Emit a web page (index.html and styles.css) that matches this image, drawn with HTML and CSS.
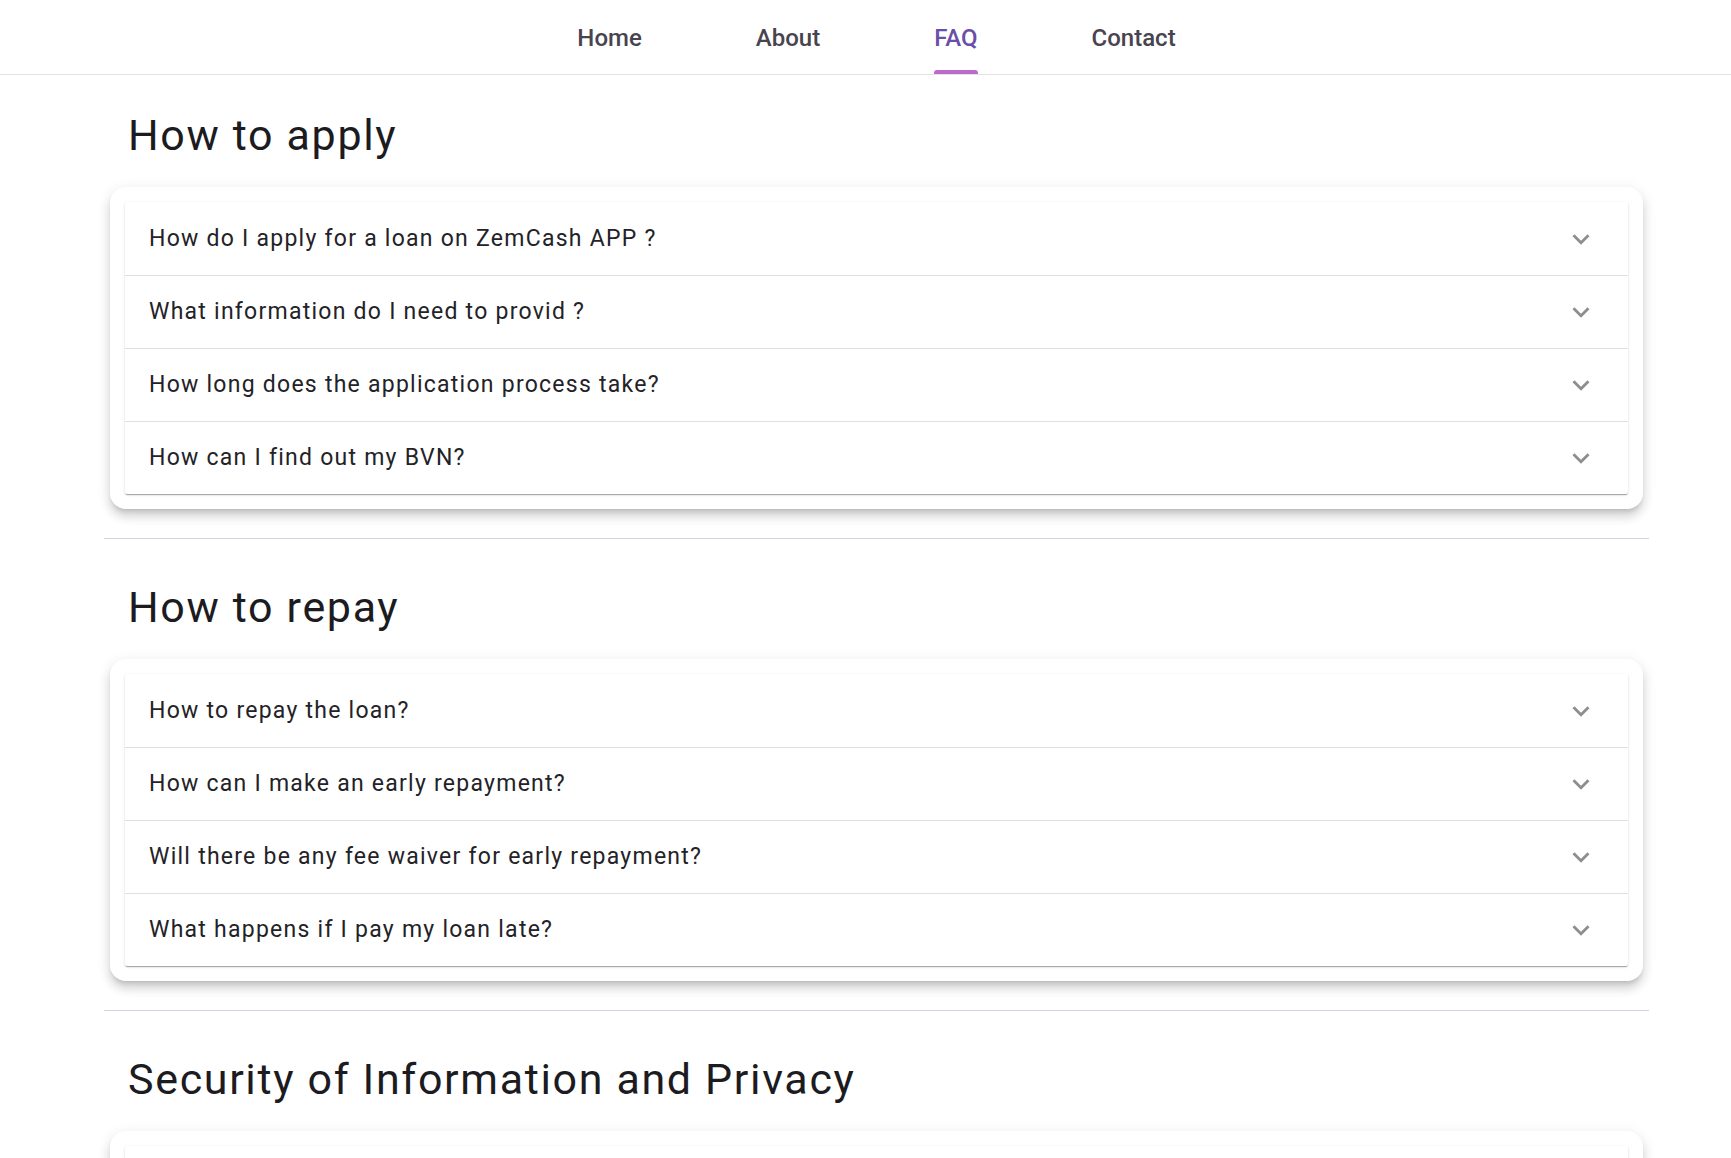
FILE: index.html
```html
<!DOCTYPE html>
<html lang="en">
<head>
<meta charset="utf-8">
<title>FAQ</title>
<link rel="stylesheet" href="styles.css">
</head>
<body>
<nav class="topnav">
  <a class="navlink" href="#">Home</a>
  <a class="navlink" href="#">About</a>
  <a class="navlink active" href="#">FAQ</a>
  <a class="navlink" href="#">Contact</a>
</nav>
<main class="page">
  <section class="faq-section first">
    <h2 class="section-title">How to apply</h2>
    <div class="card">
      <div class="accordion">
        <div class="row"><span class="q">How do I apply for a loan on ZemCash APP ?</span><svg class="chev" viewBox="0 0 24 24"><path d="M16.59 8.59 12 13.17 7.41 8.59 6 10l6 6 6-6z"/></svg></div>
        <div class="row"><span class="q">What information do I need to provid ?</span><svg class="chev" viewBox="0 0 24 24"><path d="M16.59 8.59 12 13.17 7.41 8.59 6 10l6 6 6-6z"/></svg></div>
        <div class="row"><span class="q">How long does the application process take?</span><svg class="chev" viewBox="0 0 24 24"><path d="M16.59 8.59 12 13.17 7.41 8.59 6 10l6 6 6-6z"/></svg></div>
        <div class="row"><span class="q">How can I find out my BVN?</span><svg class="chev" viewBox="0 0 24 24"><path d="M16.59 8.59 12 13.17 7.41 8.59 6 10l6 6 6-6z"/></svg></div>
      </div>
    </div>
    <hr class="divider">
  </section>
  <section class="faq-section">
    <h2 class="section-title">How to repay</h2>
    <div class="card">
      <div class="accordion">
        <div class="row"><span class="q">How to repay the loan?</span><svg class="chev" viewBox="0 0 24 24"><path d="M16.59 8.59 12 13.17 7.41 8.59 6 10l6 6 6-6z"/></svg></div>
        <div class="row"><span class="q">How can I make an early repayment?</span><svg class="chev" viewBox="0 0 24 24"><path d="M16.59 8.59 12 13.17 7.41 8.59 6 10l6 6 6-6z"/></svg></div>
        <div class="row"><span class="q">Will there be any fee waiver for early repayment?</span><svg class="chev" viewBox="0 0 24 24"><path d="M16.59 8.59 12 13.17 7.41 8.59 6 10l6 6 6-6z"/></svg></div>
        <div class="row"><span class="q">What happens if I pay my loan late?</span><svg class="chev" viewBox="0 0 24 24"><path d="M16.59 8.59 12 13.17 7.41 8.59 6 10l6 6 6-6z"/></svg></div>
      </div>
    </div>
    <hr class="divider">
  </section>
  <section class="faq-section">
    <h2 class="section-title">Security of Information and Privacy</h2>
    <div class="card">
      <div class="accordion">
        <div class="row"><span class="q">Is my personal information safe?</span><svg class="chev" viewBox="0 0 24 24"><path d="M16.59 8.59 12 13.17 7.41 8.59 6 10l6 6 6-6z"/></svg></div>
        <div class="row"><span class="q">How do you use my data?</span><svg class="chev" viewBox="0 0 24 24"><path d="M16.59 8.59 12 13.17 7.41 8.59 6 10l6 6 6-6z"/></svg></div>
      </div>
    </div>
  </section>
</main>
</body>
</html>
```
FILE: styles.css
```css
* { box-sizing: border-box; }

body {
  margin: 0;
  background: #ffffff;
  font-family: Roboto, "Noto Sans", "Liberation Sans", sans-serif;
  color: #1d1b20;
}

.topnav {
  height: 75px;
  border-bottom: 1px solid #e6e0eb;
  display: flex;
  justify-content: center;
  gap: 114px;
  padding-left: 22px;
}

.navlink {
  position: relative;
  display: block;
  padding-top: 24px;
  font-size: 24px;
  line-height: 28px;
  font-weight: 500;
  color: #48444f;
  text-decoration: none;
}

.navlink.active {
  color: #6a4fa8;
}

.navlink.active::after {
  content: "";
  position: absolute;
  left: 0;
  right: 0;
  bottom: 0;
  height: 4px;
  border-radius: 3px 3px 0 0;
  background: #bb6bc9;
}

.page {
  width: 1545px;
  margin-left: 104px;
}

.section-title {
  margin: 43px 0 27px;
  padding-left: 24px;
  font-size: 43px;
  line-height: 50px;
  font-weight: 400;
  letter-spacing: 1.65px;
  color: #1c1b1f;
}

.faq-section.first .section-title {
  margin-top: 35px;
}

.card {
  margin: 0 6px;
  padding: 15px;
  border-radius: 16px;
  background: #fff;
  box-shadow: 0 5px 5px -3px rgba(0,0,0,0.16), 0 8px 10px 1px rgba(0,0,0,0.1), 0 3px 14px 2px rgba(0,0,0,0.07);
}

.accordion {
  background: #fff;
  box-shadow: 0 2px 1px -1px rgba(0,0,0,0.2), 0 1px 1px 0 rgba(0,0,0,0.14), 0 1px 3px 0 rgba(0,0,0,0.12);
  border-radius: 2px;
}

.row {
  height: 73px;
  display: flex;
  align-items: center;
  justify-content: space-between;
  padding-left: 24px;
  border-top: 1px solid #e3dde8;
}

.row:first-child {
  border-top: none;
}

.q {
  font-size: 23px;
  line-height: 32px;
  letter-spacing: 1.25px;
  color: #232227;
}

.chev {
  width: 34px;
  height: 34px;
  margin-right: 30px;
  fill: #8e8e8e;
  flex-shrink: 0;
}

.divider {
  margin: 29px 0 0;
  border: none;
  height: 1px;
  background: #d9d1e1;
}
```
